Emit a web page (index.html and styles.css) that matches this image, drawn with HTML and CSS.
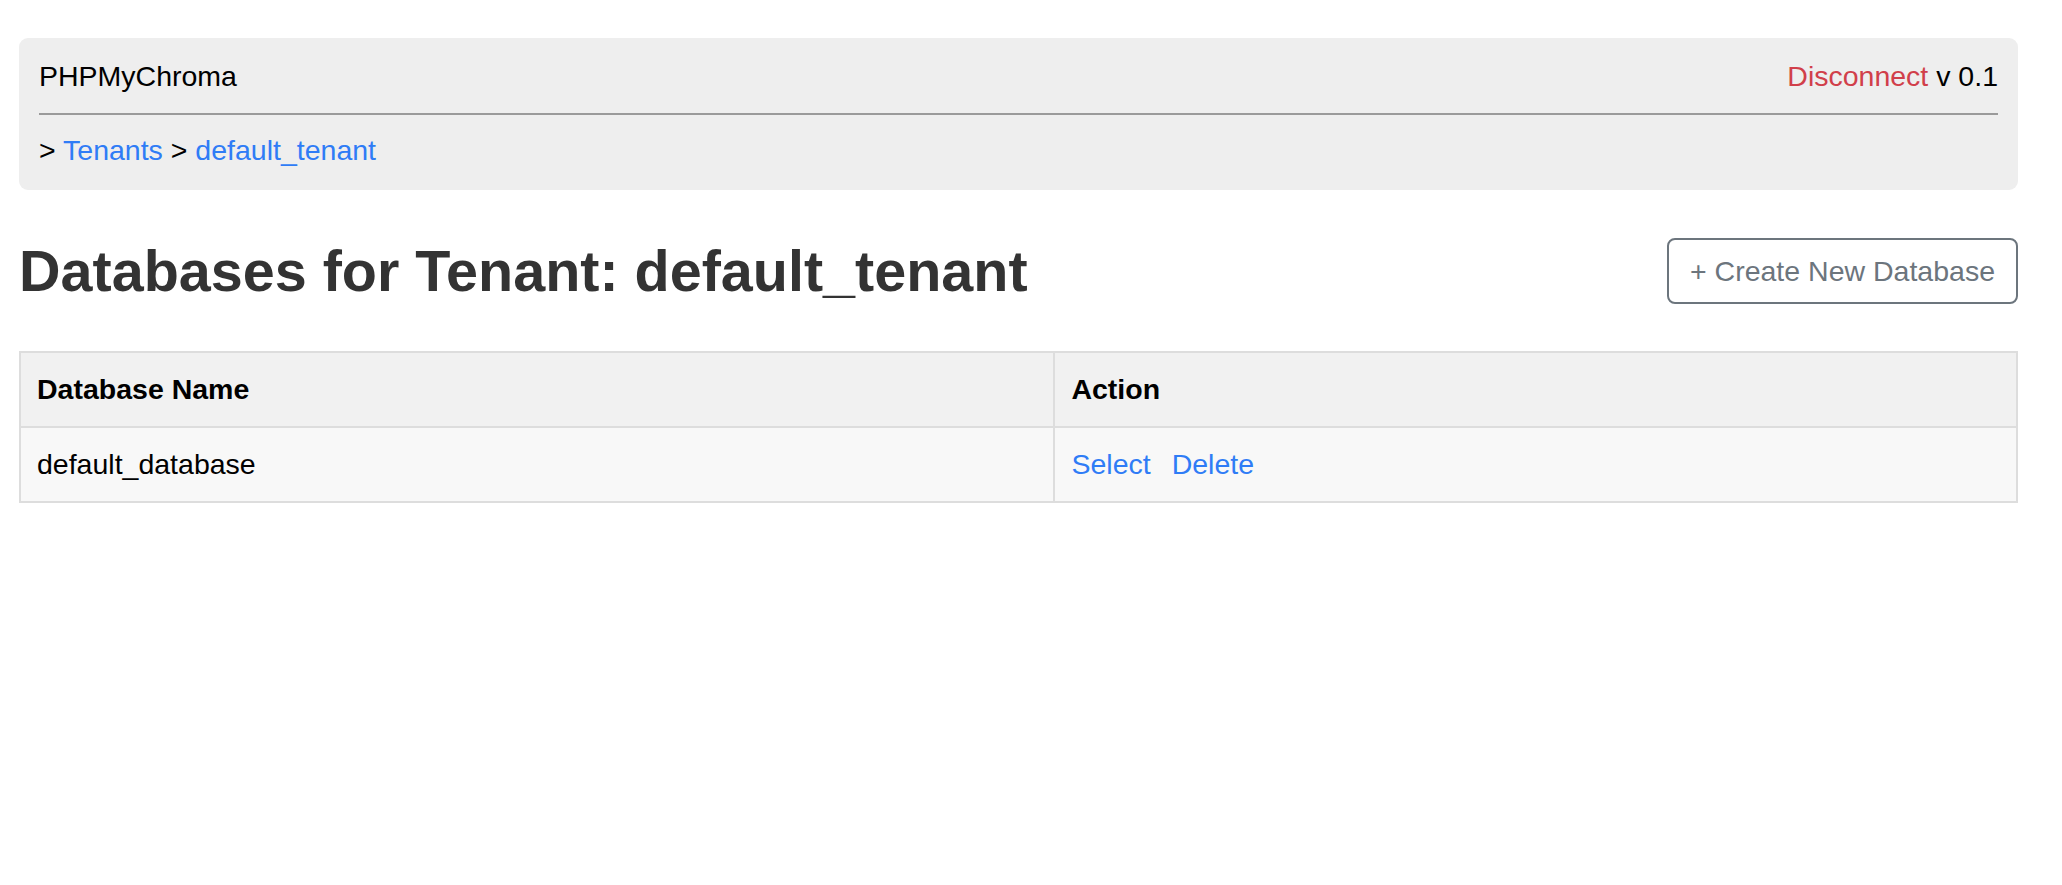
FILE: index.html
```html
<!DOCTYPE html>
<html lang="en">
<head>
<meta charset="utf-8">
<title>PHPMyChroma</title>
<link rel="stylesheet" href="styles.css">
</head>
<body>
<div class="page">
  <header class="topbar">
    <div class="topbar-row">
      <span class="brand">PHPMyChroma</span>
      <span class="meta"><a class="disconnect" href="#">Disconnect</a> v 0.1</span>
    </div>
    <hr class="divider">
    <nav class="crumbs">&gt; <a class="link" href="#">Tenants</a> &gt; <a class="link" href="#">default_tenant</a></nav>
  </header>

  <div class="title-row">
    <h1 class="title">Databases for Tenant: default_tenant</h1>
    <button class="btn-outline" type="button">+ Create New Database</button>
  </div>

  <table class="db-table">
    <colgroup>
      <col class="col-name">
      <col class="col-action">
    </colgroup>
    <thead>
      <tr>
        <th>Database Name</th>
        <th>Action</th>
      </tr>
    </thead>
    <tbody>
      <tr>
        <td>default_database</td>
        <td><span class="actions"><a class="link" href="#">Select</a><a class="link" href="#">Delete</a></span></td>
      </tr>
    </tbody>
  </table>
</div>
</body>
</html>
```

FILE: styles.css
```css
html, body {
  margin: 0;
  padding: 0;
  background: #ffffff;
}

body {
  font-family: "Liberation Sans", Arial, Helvetica, sans-serif;
  font-size: 28.5px;
  color: #000000;
}

.page {
  padding: 38px 44px 0 19px;
}

.topbar {
  background: #eeeeee;
  border-radius: 9px;
  padding: 21px 20px 23px 20px;
}

.topbar-row {
  display: flex;
  justify-content: space-between;
  align-items: baseline;
  line-height: 34px;
}

.disconnect {
  color: #d13f4a;
  text-decoration: none;
}

.divider {
  border: 0;
  border-top: 2px solid #9a9a9a;
  margin: 20px 0 18px 0;
  height: 0;
}

.crumbs {
  line-height: 34px;
}

.link {
  color: #2f7cf6;
  text-decoration: none;
}

.title-row {
  display: flex;
  justify-content: space-between;
  align-items: center;
  margin: 47px 0 46px 0;
}

.title {
  margin: 0;
  font-size: 57.5px;
  line-height: 68px;
  font-weight: bold;
  color: #333333;
}

.btn-outline {
  font-family: inherit;
  font-size: 28.5px;
  line-height: 42px;
  color: #6c757d;
  background: #ffffff;
  border: 2px solid #6c757d;
  border-radius: 8px;
  padding: 10px 21px;
  cursor: pointer;
}

.db-table {
  width: 100%;
  border-collapse: collapse;
  table-layout: fixed;
  border: 2px solid #dddddd;
}

.col-name {
  width: 51.8%;
}

.db-table th,
.db-table td {
  border: 2px solid #dddddd;
  padding: 20px 16px;
  line-height: 33px;
  text-align: left;
}

.db-table th {
  background: #f1f1f1;
  font-weight: bold;
}

.db-table td {
  background: #f8f8f8;
}

.actions {
  display: flex;
  gap: 21px;
}
```
